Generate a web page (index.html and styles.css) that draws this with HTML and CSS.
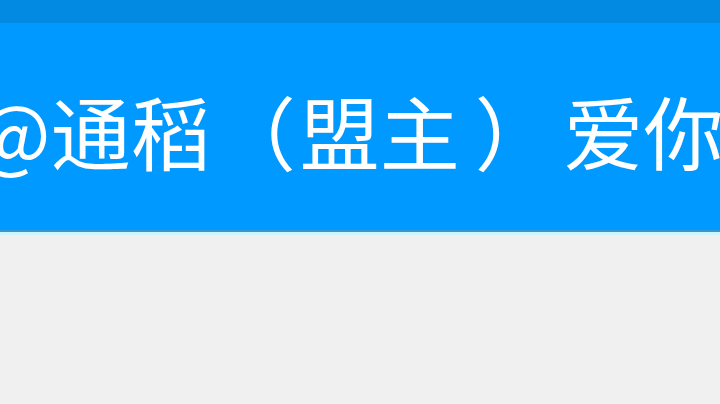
FILE: index.html
```html
<!DOCTYPE html>
<html>
<head>
<meta charset="utf-8">
<link rel="stylesheet" href="styles.css">
</head>
<body>
<div class="status"></div>
<div class="bar">
  <div class="title">@通稻<span class="lp">（</span>盟主<span class="rp">）</span> 爱你</div>
</div>
<div class="edge-dark"></div>
<div class="edge-light"></div>
<div class="content"></div>
</body>
</html>
```
FILE: styles.css
```css
html, body {
  margin: 0;
  padding: 0;
  width: 720px;
  height: 404px;
  overflow: hidden;
  background: #f0f0f0;
}
.status {
  height: 23px;
  background: #0289e2;
}
.bar {
  height: 207px;
  background: #0099ff;
  display: flex;
  align-items: center;
  overflow: hidden;
}
.title {
  margin-left: -25px;
  white-space: nowrap;
  color: #ffffff;
  font-family: "Noto Sans CJK SC", "Noto Sans", sans-serif;
  font-size: 80px;
  line-height: 1;
  padding-top: 4px;
  word-spacing: -9px;
}
.lp {
  margin-left: 5px;
  margin-right: 4px;
}
.rp {
  margin-left: 15px;
}
.edge-dark {
  height: 2px;
  background: #3d94d2;
}
.edge-light {
  height: 3px;
  background: #c9f7fd;
}
.content {
  height: 169px;
  background: #f0f0f0;
}
```
